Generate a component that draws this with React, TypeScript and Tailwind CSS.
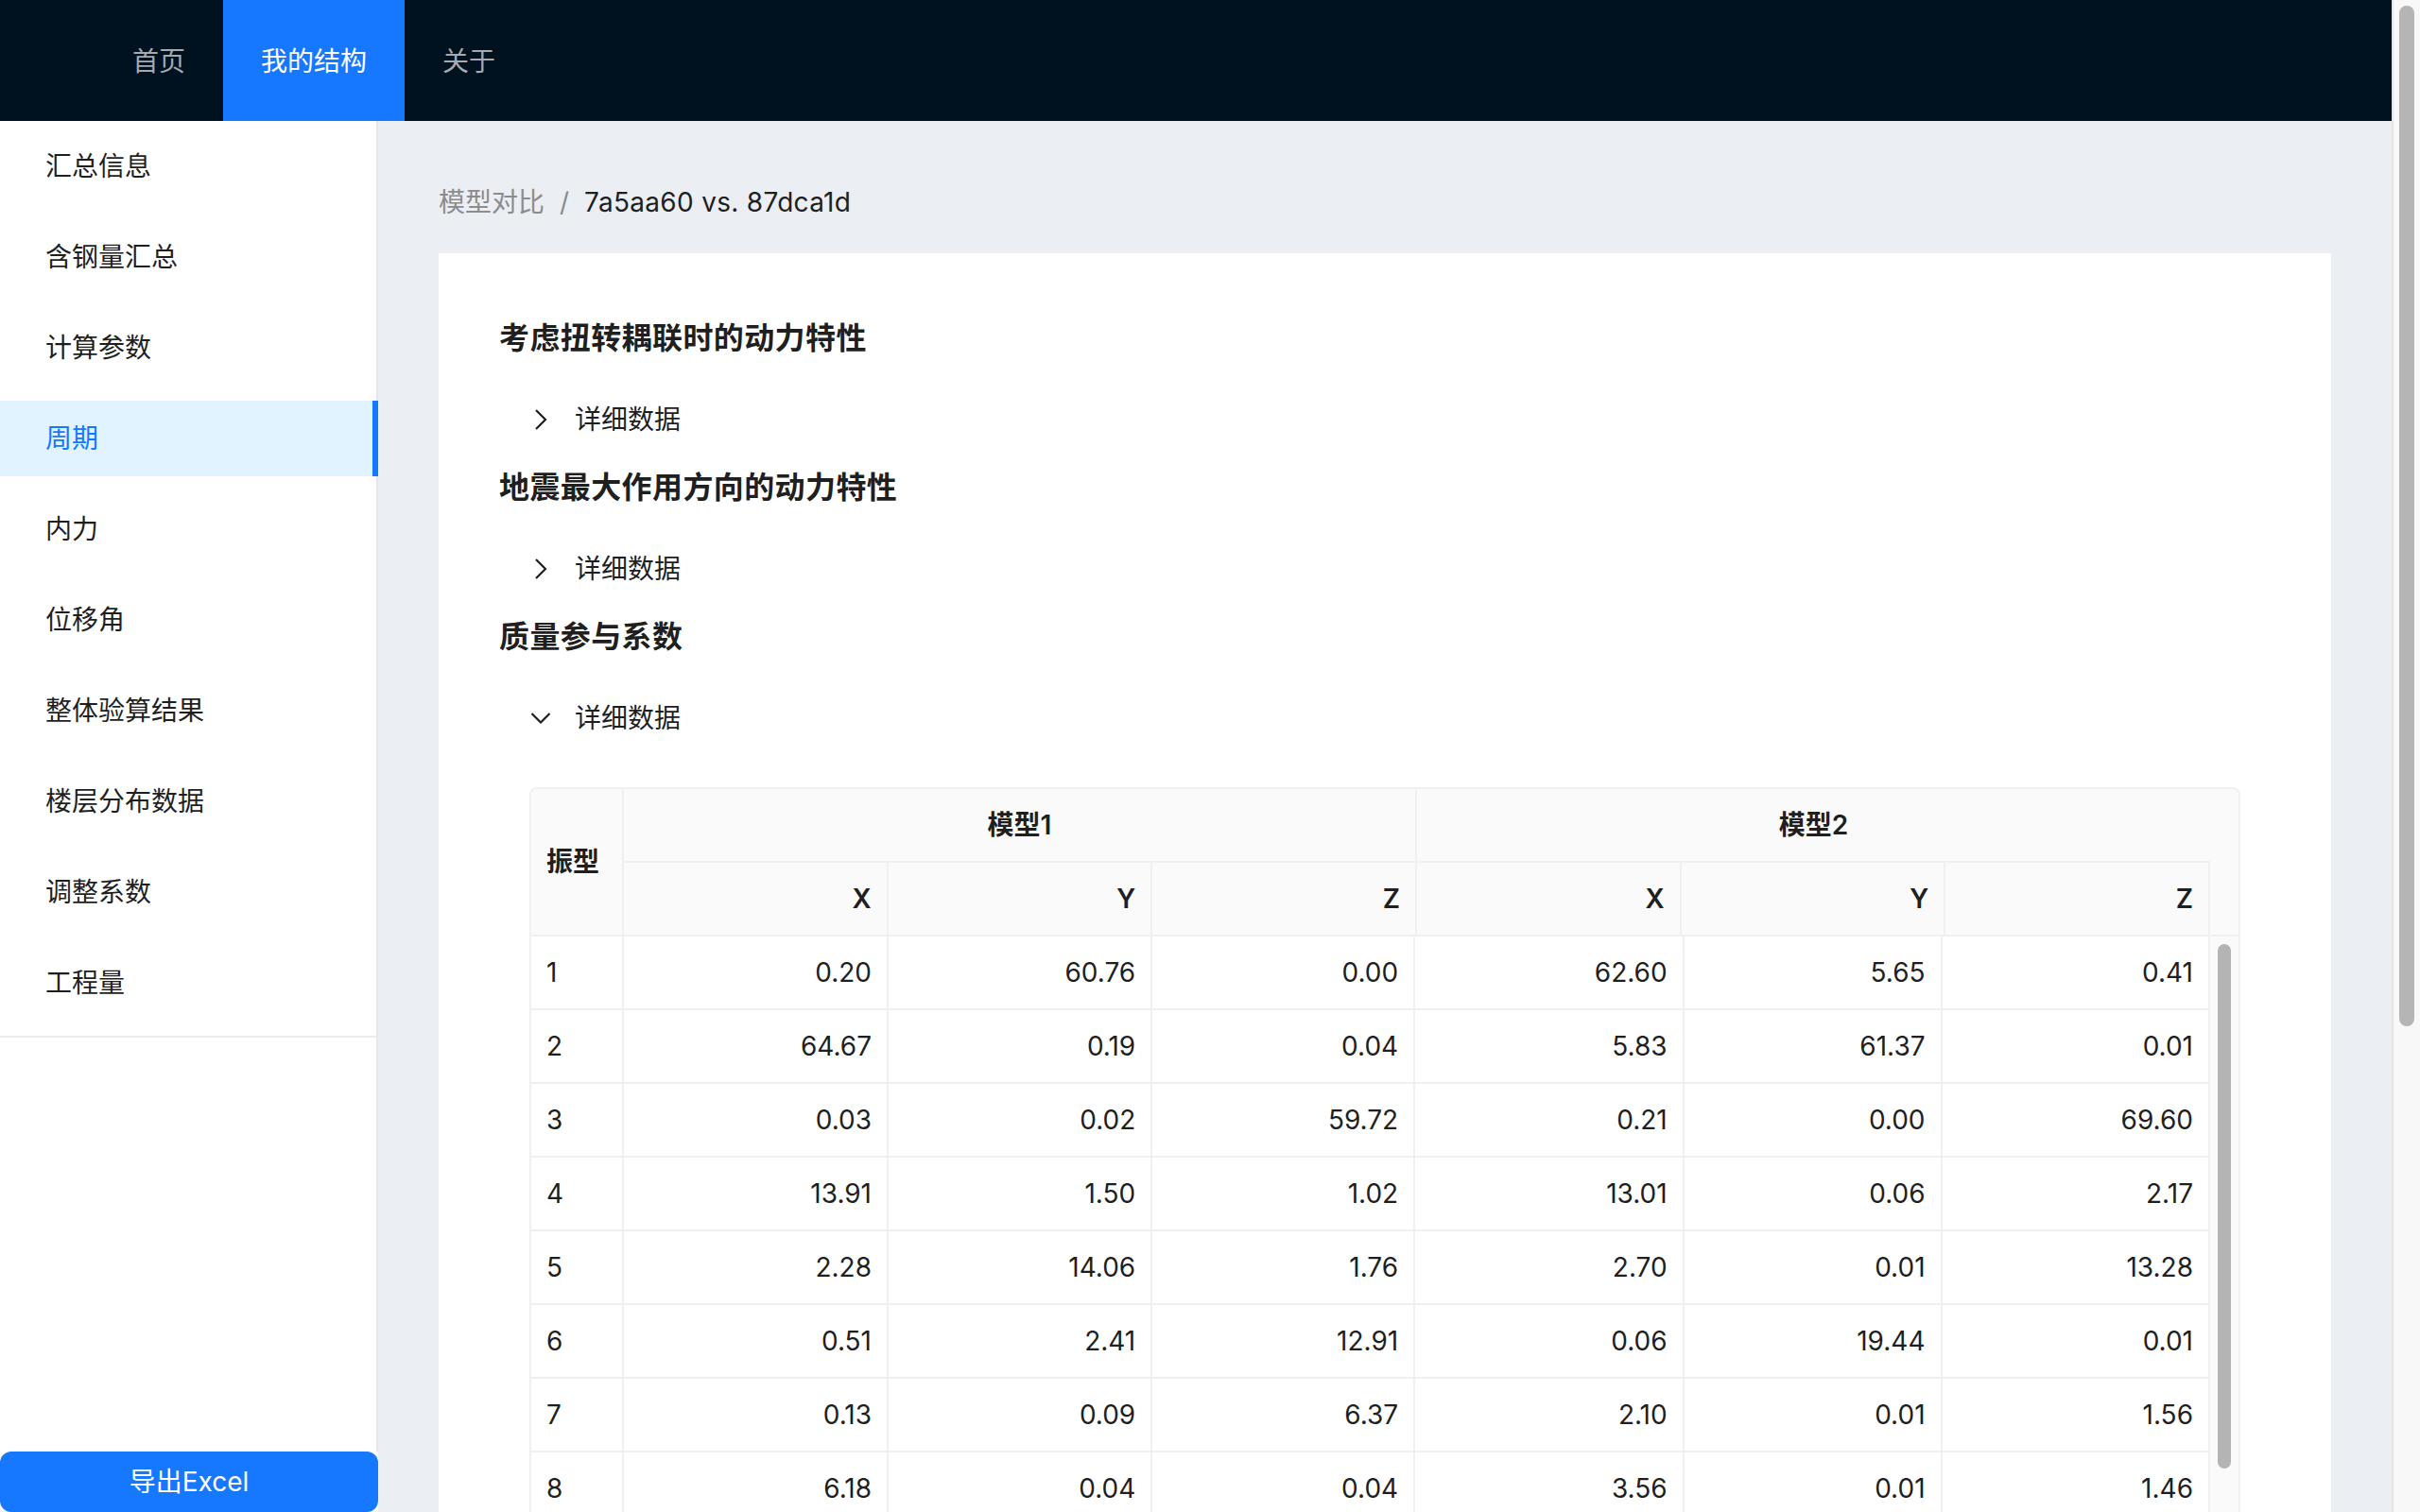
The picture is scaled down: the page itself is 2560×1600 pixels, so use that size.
import React from "react";

const NAV = ["首页", "我的结构", "关于"];
const MENU = ["汇总信息", "含钢量汇总", "计算参数", "周期", "内力", "位移角", "整体验算结果", "楼层分布数据", "调整系数", "工程量"];

const ROWS: string[][] = [
  ["0.20", "60.76", "0.00", "62.60", "5.65", "0.41"],
  ["64.67", "0.19", "0.04", "5.83", "61.37", "0.01"],
  ["0.03", "0.02", "59.72", "0.21", "0.00", "69.60"],
  ["13.91", "1.50", "1.02", "13.01", "0.06", "2.17"],
  ["2.28", "14.06", "1.76", "2.70", "0.01", "13.28"],
  ["0.51", "2.41", "12.91", "0.06", "19.44", "0.01"],
  ["0.13", "0.09", "6.37", "2.10", "0.01", "1.56"],
  ["6.18", "0.04", "0.04", "3.56", "0.01", "1.46"],
];

function Chevron({ open }: { open?: boolean }) {
  return (
    <svg width="24" height="24" viewBox="0 0 24 24" fill="none" aria-hidden="true">
      {open ? (
        <path d="M2.5 7 L12 16.5 L21.5 7" stroke="#1f1f1f" strokeWidth="2.2" />
      ) : (
        <path d="M7 2 L17 12 L7 22" stroke="#1f1f1f" strokeWidth="2.2" />
      )}
    </svg>
  );
}

function Section({ title, open, children }: { title: string; open?: boolean; children?: React.ReactNode }) {
  return (
    <div className="mb-[2px]">
      <h3 className="mb-[16px] text-[32px] font-semibold leading-[48px] tracking-[0.4px] text-[#1f1f1f]">{title}</h3>
      <div className="flex h-[92px] items-center pl-[32px] text-[28px] text-[#1f1f1f]">
        <span className="mr-[24px] flex w-[24px] items-center justify-center">
          <Chevron open={open} />
        </span>
        详细数据
      </div>
      {children}
    </div>
  );
}

function DataTable() {
  const th = "bg-[#fafafa] px-[16px] py-[16px] text-[28px] font-semibold leading-[44px] text-[#1f1f1f] border-b-2 border-[#f0f0f0]";
  const td = "px-[16px] py-[16px] text-[28px] leading-[44px] text-[#1f1f1f] border-b-2 border-r-2 border-[#f0f0f0]";
  return (
    <div className="overflow-hidden rounded-t-[8px] border-x-2 border-t-2 border-[#f0f0f0]">
      <table className="w-full table-fixed border-separate border-spacing-0">
        <colgroup>
          <col className="w-[98px]" />
          <col />
          <col />
          <col />
          <col />
          <col />
          <col />
          <col className="w-[30px]" />
        </colgroup>
        <thead>
          <tr>
            <th rowSpan={2} className={`${th} border-r-2 text-left`}>振型</th>
            <th colSpan={3} className={`${th} border-r-2 text-center`}>模型1</th>
            <th colSpan={3} className={`${th} text-center`}>模型2</th>
            <th rowSpan={2} className="border-b-2 border-[#f0f0f0] bg-[#fafafa]" />
          </tr>
          <tr>
            {["X", "Y", "Z", "X", "Y", "Z"].map((h, i) => (
              <th key={i} className={`${th} border-r-2 text-right`}>{h}</th>
            ))}
          </tr>
        </thead>
      </table>
      <div className="flex">
        <table className="min-w-0 flex-1 table-fixed border-separate border-spacing-0">
          <colgroup>
            <col className="w-[98px]" />
            <col />
            <col />
            <col />
            <col />
            <col />
            <col />
          </colgroup>
          <tbody>
            {ROWS.map((r, i) => (
              <tr key={i}>
                <td className={`${td} text-left`}>{i + 1}</td>
                {r.map((v, j) => (
                  <td key={j} className={`${td} text-right`}>{v}</td>
                ))}
              </tr>
            ))}
          </tbody>
        </table>
        <div className="w-[30px] shrink-0 bg-[#fafafa] pt-[8px]">
          <div className="mx-auto h-[555px] w-[14px] rounded-full bg-[#b4b4b4]" />
        </div>
      </div>
    </div>
  );
}

export default function App() {
  return (
    <div className="flex h-[1600px] w-[2560px] overflow-hidden bg-[#ebeef3] font-[Inter,'Noto_Sans_CJK_SC',sans-serif]">
      <div className="flex min-w-0 flex-1 flex-col">
        <header className="flex h-[128px] shrink-0 bg-[#00111f] pl-[100px]">
          {NAV.map((n, i) => (
            <div
              key={n}
              className={
                i === 1
                  ? "flex h-full items-center bg-[#1677ff] px-[40px] pt-[2px] text-[28px] text-white"
                  : "flex h-full items-center px-[40px] pt-[2px] text-[28px] text-[#a6aab0]"
              }
            >
              {n}
            </div>
          ))}
        </header>
        <div className="flex min-h-0 flex-1">
          <aside className="flex w-[400px] shrink-0 flex-col bg-white">
            <div className="flex flex-1 flex-col border-r-2 border-[#e6e8ec]">
              <nav className="flex flex-col gap-[16px] border-b-2 border-[#ececec] pb-[16px] pt-[8px]">
                {MENU.map((m) => (
                  <div
                    key={m}
                    className={
                      m === "周期"
                        ? "-mr-[2px] flex h-[80px] items-center border-r-[6px] border-[#1677ff] bg-[#e0f3fe] pl-[48px] text-[28px] text-[#1677ff]"
                        : "flex h-[80px] items-center pl-[48px] text-[28px] text-[#1f1f1f]"
                    }
                  >
                    {m}
                  </div>
                ))}
              </nav>
              <div className="flex-1" />
            </div>
            <button
              type="button"
              className="flex h-[64px] w-[400px] shrink-0 items-center justify-center rounded-[12px] bg-[#1677ff] text-[28px] text-white"
            >
              导出Excel
            </button>
          </aside>
          <main className="min-w-0 flex-1 overflow-hidden px-[64px] pt-[64px]">
            <div className="flex h-[44px] items-center text-[28px] leading-[44px]">
              <span className="text-[#8c8c8c]">模型对比</span>
              <span className="mx-[16px] text-[#8c8c8c]">/</span>
              <span className="tracking-[0.3px] text-[#1f1f1f]">7a5aa60 vs. 87dca1d</span>
            </div>
            <div className="mt-[32px] bg-white px-[64px] pt-[66px]">
              <Section title="考虑扭转耦联时的动力特性" />
              <Section title="地震最大作用方向的动力特性" />
              <Section title="质量参与系数" open>
                <div className="px-[32px] pt-[27px]">
                  <DataTable />
                </div>
              </Section>
            </div>
          </main>
        </div>
      </div>
      <div className="flex w-[30px] shrink-0 justify-center border-l-2 border-[#e4e4e4] bg-[#f8f8f8] pt-[6px]">
        <div className="h-[1080px] w-[16px] rounded-full bg-[#b5b5b5]" />
      </div>
    </div>
  );
}
